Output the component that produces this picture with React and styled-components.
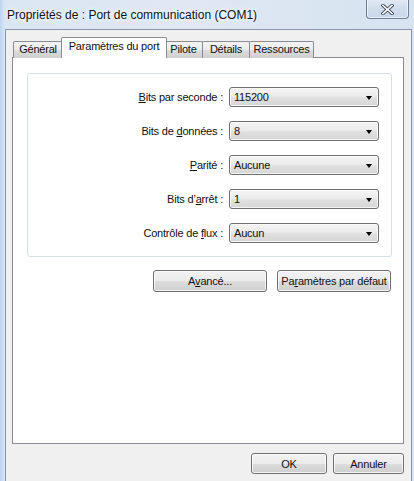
import { Fragment } from "react";
import styled, { createGlobalStyle } from "styled-components";

const GlobalStyle = createGlobalStyle`
  html, body { margin: 0; padding: 0; }
  body {
    font-family: "Liberation Sans", Arial, sans-serif;
    font-size: 11px;
    letter-spacing: -0.2px;
    color: #111;
  }
  * { box-sizing: border-box; }
`;

const Window = styled.div`
  width: 414px;
  height: 481px;
  overflow: hidden;
  display: flex;
  flex-direction: column;
  padding: 0 2px 0 5px;
  background:
    linear-gradient(90deg, #bcd3ee 0, #cfe0f4 3px, #dbe6f3 5px, #dfe8f3 45%, #d7e3f1 100%);
`;

const TitleBar = styled.div`
  height: 29px;
  flex: none;
  display: flex;
  align-items: flex-start;
`;

const Title = styled.span`
  padding: 8px 0 0 2px;
  font-size: 12px;
  letter-spacing: 0;
  color: #111;
  text-shadow: 0 0 6px #fff, 0 0 3px #fff;
`;

const CloseButton = styled.div`
  margin: -2px 3px 0 auto;
  width: 43px;
  height: 21px;
  border: 1px solid #6f7f96;
  border-top: none;
  border-radius: 0 0 4px 4px;
  background: linear-gradient(#e4ecf6, #d0dcec 55%, #c9d7ea);
  box-shadow: inset 0 0 0 1px rgba(255, 255, 255, 0.6);
  display: flex;
  align-items: center;
  justify-content: center;
  padding-top: 2px;
`;

const Body = styled.div`
  flex: 1;
  border: 1px solid #8a96a8;
  border-bottom: none;
  background: #f0f0f0;
  padding: 7px 7px 0 6px;
  display: flex;
  flex-direction: column;
`;

const TabStrip = styled.div`
  display: flex;
  align-items: flex-end;
  height: 21px;
  margin-bottom: -1px;
  padding-left: 1px;
  position: relative;
  z-index: 1;
`;

const Tab = styled.div`
  width: ${(p) => p.$w}px;
  height: ${(p) => (p.$active ? 21 : 17)}px;
  margin-left: ${(p) => (p.$active ? -2 : -1)}px;
  margin-right: ${(p) => (p.$active ? -2 : 0)}px;
  border: 1px solid #898c95;
  border-bottom: none;
  border-radius: 2px 2px 0 0;
  background: ${(p) =>
    p.$active ? "#fff" : "linear-gradient(#f3f3f3, #ebebeb 50%, #dddddd 50%, #cfcfcf)"};
  position: relative;
  z-index: ${(p) => (p.$active ? 2 : 0)};
  display: flex;
  justify-content: center;
  padding-top: ${(p) => (p.$active ? 2 : 1)}px;
  white-space: nowrap;

  &:first-child {
    margin-left: 0;
  }
`;

const TabPage = styled.div`
  width: 392px;
  height: 387px;
  flex: none;
  border: 1px solid #898c95;
  background: #fff;
  padding: 15px 0 0 14px;
`;

const GroupBox = styled.div`
  width: 365px;
  border: 1px solid #d5dfe5;
  border-radius: 3px;
  padding: 13px 12px 13px 0;
  display: grid;
  grid-template-columns: 1fr 150px;
  grid-auto-rows: 20px;
  row-gap: 14px;
  column-gap: 6px;
`;

const Label = styled.label`
  align-self: center;
  text-align: right;
  white-space: nowrap;
`;

const Key = styled.span`
  text-decoration: underline;
  text-underline-offset: 1px;
`;

const Combo = styled.div`
  height: 20px;
  border: 1px solid #707070;
  border-radius: 3px;
  background: linear-gradient(#f3f3f3, #ececec 45%, #e0e0e0 55%, #d6d6d6);
  box-shadow: inset 0 0 0 1px rgba(255, 255, 255, 0.7);
  display: flex;
  align-items: center;
  padding: 0 6px 0 4px;

  span {
    flex: 1;
  }

  &::after {
    content: "";
    border-left: 3.5px solid transparent;
    border-right: 3.5px solid transparent;
    border-top: 4px solid #000;
    margin-top: 1px;
  }
`;

const ButtonRow = styled.div`
  width: 364px;
  margin-top: 13px;
  display: flex;
  justify-content: flex-end;
  gap: 10px;
`;

const Button = styled.div`
  width: ${(p) => p.$w}px;
  height: ${(p) => p.$h || 22}px;
  border: 1px solid #707070;
  border-radius: 3px;
  background: linear-gradient(#f2f2f2, #ebebeb 50%, #dddddd 50%, #cfcfcf);
  box-shadow: inset 0 0 0 1px rgba(255, 255, 255, 0.75);
  display: flex;
  align-items: center;
  justify-content: center;
  white-space: nowrap;
`;

const Footer = styled.div`
  display: flex;
  justify-content: flex-end;
  gap: 6px;
  padding-top: 9px;
  width: 392px;
`;

const tabs = [
  { label: "Général", w: 50 },
  { label: "Paramètres du port", w: 106, active: true },
  { label: "Pilote", w: 39 },
  { label: "Détails", w: 48 },
  { label: "Ressources", w: 65 },
];

const fields = [
  { pre: "", key: "B", post: "its par seconde :", value: "115200" },
  { pre: "Bits de ", key: "d", post: "onnées :", value: "8" },
  { pre: "", key: "P", post: "arité :", value: "Aucune" },
  { pre: "Bits d\u2019", key: "a", post: "rrêt :", value: "1" },
  { pre: "Contrôle de ", key: "f", post: "lux :", value: "Aucun" },
];

export default function App() {
  return (
    <>
      <GlobalStyle />
      <Window>
        <TitleBar>
          <Title>Propriétés de : Port de communication (COM1)</Title>
          <CloseButton>
            <svg width="13" height="11" viewBox="0 0 13 11">
              <path d="M2 1.5 L11 9.5 M11 1.5 L2 9.5" stroke="#3f4a5a" strokeWidth="3.4" strokeLinecap="square" />
              <path d="M2 1.5 L11 9.5 M11 1.5 L2 9.5" stroke="#fff" strokeWidth="1.6" strokeLinecap="square" />
            </svg>
          </CloseButton>
        </TitleBar>
        <Body>
          <TabStrip>
            {tabs.map((t) => (
              <Tab key={t.label} $w={t.w} $active={t.active}>
                {t.label}
              </Tab>
            ))}
          </TabStrip>
          <TabPage>
            <GroupBox>
              {fields.map((f) => (
                <Fragment key={f.post}>
                  <Label>
                    {f.pre}
                    <Key>{f.key}</Key>
                    {f.post}
                  </Label>
                  <Combo>
                    <span>{f.value}</span>
                  </Combo>
                </Fragment>
              ))}
            </GroupBox>
            <ButtonRow>
              <Button $w={114}>
                A<Key>v</Key>ancé...
              </Button>
              <Button $w={114}>
                Pa<Key>r</Key>amètres par défaut
              </Button>
            </ButtonRow>
          </TabPage>
          <Footer>
            <Button $w={76} $h={21}>OK</Button>
            <Button $w={71} $h={21}>Annuler</Button>
          </Footer>
        </Body>
      </Window>
    </>
  );
}
